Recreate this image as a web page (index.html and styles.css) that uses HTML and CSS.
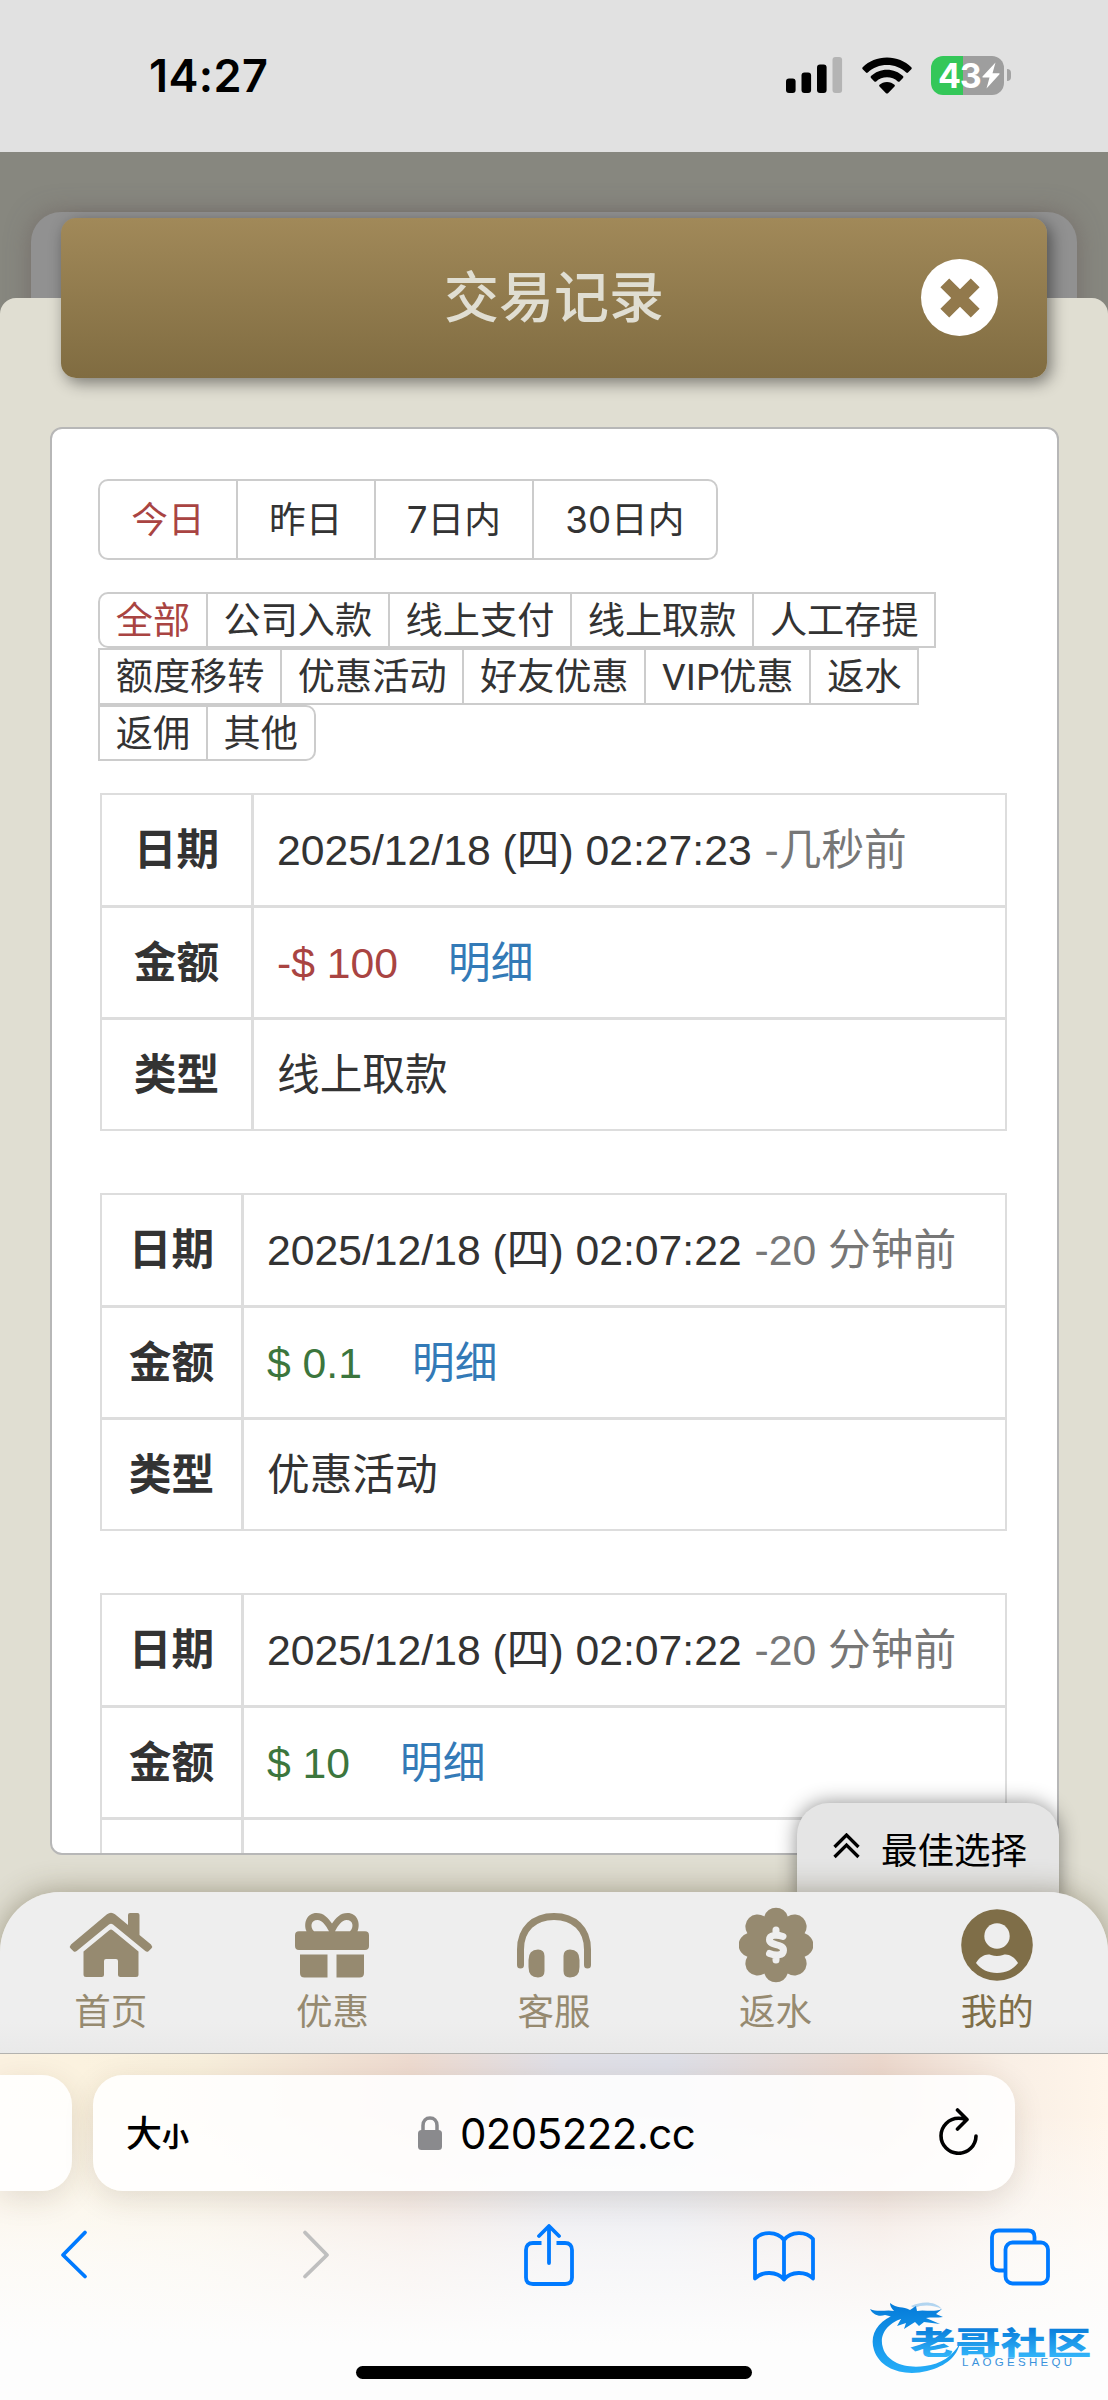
FILE: index.html
```html
<!DOCTYPE html>
<html lang="zh-CN">
<head>
  <meta charset="UTF-8" />
  <meta name="viewport" content="width=device-width, initial-scale=1" />
  <title>交易记录</title>
  <link rel="stylesheet" href="styles.css">
</head>
<body>
  <div class="phone">
    <header class="status-bar">
      <span class="clock">14:27</span>
      <div class="status-icons">
        <svg class="signal" viewBox="0 0 57 36" width="57" height="36">
          <rect x="0" y="21.500" width="9.600" height="14.500" rx="3" />
          <rect x="15.500" y="15.500" width="9.600" height="20.500" rx="3" />
          <rect x="31" y="7.500" width="9.600" height="28.500" rx="3" />
          <rect x="46.500" y="0" width="9.600" height="36" rx="3" fill="#b4b4b4" />
        </svg>
        <svg class="wifi" viewBox="0 0 50 37" width="50" height="37">
          <path d="M25 0.500C34.500 0.500 43 4 49.300 10.300Q50.200 11.300 49.300 12.200L46 15.600Q45.200 16.400 44.200 15.500C39 10.600 32.300 8 25 8S11 10.600 5.800 15.500Q4.800 16.400 4 15.600L0.700 12.200Q-0.200 11.300 0.700 10.300C7 4 15.500 0.500 25 0.500Z" />
          <path d="M25 12.800C31.200 12.800 36.800 15.200 41 19.100Q41.900 20.100 41 21L37.600 24.400Q36.700 25.200 35.800 24.400C32.800 21.700 29.100 20.300 25 20.300S17.200 21.700 14.200 24.400Q13.300 25.200 12.400 24.400L9 21Q8.100 20.100 9 19.100C13.200 15.200 18.800 12.800 25 12.800Z" />
          <path d="M25 25C28 25 30.600 26.100 32.500 27.800Q33.400 28.700 32.500 29.600L26 36.200Q25 37 24 36.200L17.500 29.600Q16.600 28.700 17.500 27.800C19.400 26.100 22 25 25 25Z" />
        </svg>
        <div class="battery">
          <span class="battery-level">43</span>
          <svg viewBox="0 0 18 27" width="18" height="27"><path d="M13.500 0.500 0.500 14.500Q0 15.500 1 15.500H7.500L4.500 26.500 17.500 12.300Q18 11.300 17 11.300H10.500Z" /></svg>
        </div>
      </div>
    </header>

    <main class="app">
      <div class="back-card"></div>
      <div class="modal-header">
        <h1>交易记录</h1>
        <button class="close" type="button" aria-label="关闭">
          <svg viewBox="0 0 40 40" width="40" height="40"><path d="M4.800 4.800 35.200 35.200M35.200 4.800 4.800 35.200" /></svg>
        </button>
      </div>

      <section class="sheet">
        <div class="panel">
          <div class="date-tabs">
            <span class="on">今日</span><span>昨日</span><span>7日内</span><span>30日内</span>
          </div>
          <div class="filters">
            <span class="on">全部</span><span>公司入款</span><span>线上支付</span><span>线上取款</span><span>人工存提</span><span>额度移转</span><span>优惠活动</span><span>好友优惠</span><span>VIP优惠</span><span>返水</span><span>返佣</span><span>其他</span>
          </div>

          <table class="record record-wide">
            <tr><th>日期</th><td>2025/12/18 (四) 02:27:23 <span class="ago">-几秒前</span></td></tr>
            <tr><th>金额</th><td><span class="minus">-$ 100</span><a class="detail">明细</a></td></tr>
            <tr><th>类型</th><td>线上取款</td></tr>
          </table>
          <table class="record">
            <tr><th>日期</th><td>2025/12/18 (四) 02:07:22 <span class="ago">-20 分钟前</span></td></tr>
            <tr><th>金额</th><td><span class="plus">$ 0.1</span><a class="detail">明细</a></td></tr>
            <tr><th>类型</th><td>优惠活动</td></tr>
          </table>
          <table class="record">
            <tr><th>日期</th><td>2025/12/18 (四) 02:07:22 <span class="ago">-20 分钟前</span></td></tr>
            <tr><th>金额</th><td><span class="plus">$ 10</span><a class="detail">明细</a></td></tr>
            <tr><th></th><td></td></tr>
          </table>
        </div>
      </section>

      <div class="best-pick">
        <svg viewBox="0 0 27 26" width="27" height="26"><path d="M1.500 14 13.500 2 25.500 14M1.500 24 13.500 12 25.500 24" /></svg>
        <span>最佳选择</span>
      </div>

      <nav class="tab-bar">
        <a>
          <svg viewBox="0 0 84 76" width="84" height="76">
            <path d="M38 7.200Q42 4.200 46 7.200L59 18V8Q59 6 61 6H68.500Q70.500 6 70.500 8V28L82 37.500Q84 39.500 82.300 41.500L79.500 44.200Q78 45.500 76.300 44L44 17.500Q42 16 40 17.500L7.700 44Q6 45.500 4.500 44.200L1.700 41.500Q0 39.500 2 37.500Z" />
            <path d="M40.300 23.200Q42 21.800 43.700 23.200L69.500 44.500V67.500Q69.500 70 67 70H51.500Q49 70 49 67.500V54Q49 52 47 52H37Q35 52 35 54V67.500Q35 70 32.500 70H17Q14.500 70 14.500 67.500V44.500Z" />
          </svg>
          <span>首页</span>
        </a>
        <a>
          <svg viewBox="0 0 74 76" width="74" height="76">
            <path fill-rule="evenodd" d="M4 24.300H11.500C8 16 12 6 21.500 6C29 6 33 11 37 16.500C41 11 45 6 52.500 6C62 6 66 16 62.500 24.300H70Q74 24.300 74 28.300V39Q74 43 70 43H4Q0 43 0 39V28.300Q0 24.300 4 24.300ZM19 24.300H34C31 18.500 27 13 22.500 13C15.500 13 15 20.500 19 24.300ZM40 24.300H55C59 20.500 58.500 13 51.500 13C47 13 43 18.500 40 24.300Z" />
            <path d="M5 47.500H32.500V70.500H9.500Q5 70.500 5 66ZM41.500 47.500H69V66Q69 70.500 64.500 70.500H41.500Z" />
          </svg>
          <span>优惠</span>
        </a>
        <a>
          <svg viewBox="0 0 76 76" width="76" height="76">
            <path class="band" d="M4.500 58V42.500C4.500 22 18 9.500 38 9.500S71.500 22 71.500 42.500V58" />
            <path d="M22 42.500Q28.500 42.500 28.500 49V64Q28.500 70.500 22 70.500Q12.500 70.500 12.500 60V53Q12.500 42.500 22 42.500ZM54 42.500Q47.500 42.500 47.500 49V64Q47.500 70.500 54 70.500Q63.500 70.500 63.500 60V53Q63.500 42.500 54 42.500Z" />
          </svg>
          <span>客服</span>
        </a>
        <a>
          <svg viewBox="0 0 74 76" width="74" height="76">
            <path d="M25.300 9.400A12.200 12.200 0 0 1 48.700 9.400A12.200 12.200 0 0 1 65.600 26.300A12.200 12.200 0 0 1 65.600 49.700A12.200 12.200 0 0 1 48.700 66.600A12.200 12.200 0 0 1 25.300 66.600A12.200 12.200 0 0 1 8.400 49.700A12.200 12.200 0 0 1 8.400 26.300A12.200 12.200 0 0 1 25.300 9.400Z" />
            <path class="coin" d="M37 23V28M37 48V53M44 29.500C38 27.500 30.500 27.500 30.500 32.800C30.500 39 44.500 36.500 44.500 43.200C44.500 49 36 48.800 30.500 46.500" />
          </svg>
          <span>返水</span>
        </a>
        <a class="current">
          <svg viewBox="0 0 74 76" width="74" height="76">
            <circle cx="37" cy="38" r="35.800" />
            <circle class="hole" cx="37" cy="29" r="12.700" />
            <path class="hole" d="M16 56C20 49.500 26 46.500 31 48Q37 49.800 43 48C48 46.500 54 49.500 58 56C53 62.500 46 66 37 66S21 62.500 16 56Z" />
          </svg>
          <span>我的</span>
        </a>
      </nav>
    </main>

    <footer class="browser">
      <div class="address-row">
        <div class="prev-tab"></div>
        <div class="address">
          <span class="text-size">大<small>小</small></span>
          <div class="url">
            <svg viewBox="0 0 24 34" width="24" height="34">
              <rect x="0" y="14" width="24" height="20" rx="3.500" />
              <path d="M5 16V9.500C5 4.500 8 2 12 2S19 4.500 19 9.500V16" />
            </svg>
            <span>0205222.cc</span>
          </div>
          <svg class="reload" viewBox="0 0 39 47" width="39" height="47">
            <path d="M27 11.500C24.600 10.700 22 10.300 19.500 10.300A17.500 17.500 0 1 0 37 28M18.500 2 28 11.500 18.500 21" />
          </svg>
        </div>
      </div>

      <div class="toolbar">
        <svg viewBox="0 0 28 62" width="28" height="62"><path d="M25 8.500 3 31 25 52.500" /></svg>
        <svg class="off" viewBox="0 0 28 62" width="28" height="62"><path d="M3 8.500 25 31 3 52.500" /></svg>
        <svg viewBox="0 0 50 62" width="50" height="62"><path stroke-linecap="butt" d="M17.500 19H9Q2 19 2 26V53.500Q2 60 9 60H41Q48 60 48 53.500V26Q48 19 41 19H32.500" /><path d="M25 39V2.500M15 12 25 2 35 12" /></svg>
        <svg viewBox="0 0 62 62" width="62" height="62"><path d="M31 16C24 7 9 7 2 15V54.500C9 47 24 47 31 55.500C38 47 53 47 60 54.500V15C53 7 38 7 31 16ZM31 16V55.500" /></svg>
        <svg viewBox="0 0 60 62" width="60" height="62"><rect x="15.500" y="18.500" width="42.500" height="41" rx="7" /><path stroke-linecap="butt" d="M44.500 18V13Q44.500 6.500 38 6.500H9Q2 6.500 2 13V40Q2 46.500 9 46.500H14.500" /></svg>
      </div>
      <div class="home-indicator"></div>

      <svg class="watermark" viewBox="0 0 226 80" width="226" height="80">
        <defs>
          <linearGradient id="blue" gradientUnits="userSpaceOnUse" x1="0" y1="8" x2="0" y2="72">
            <stop offset="0" stop-color="#067edb" />
            <stop offset="1" stop-color="#25adf8" />
          </linearGradient>
          <linearGradient id="name" x1="0" y1="0" x2="0" y2="1">
            <stop offset="0.200" stop-color="#087bd9" />
            <stop offset="0.900" stop-color="#35b8fb" />
          </linearGradient>
        </defs>
        <g fill="url(#blue)">
          <path d="M27 14C8 20-1 35 4 50C10 69 34 77 57 71C77 66 87 56 90 43C83 56 71 64 55 66C35 69 17 62 13 48C8 33 20 21 37 17Z" />
          <path d="M0 9C9 13 16 9 24 11C21 8 20 5 20 3C27 9 33 6 40 10L46 6 47 11C55 9 62 13 72 9L66 14 73 17C67 18 61 17 56 18L70 24 54 22 49 26 45 22 34 29 36 23 27 26 31 19C25 20 22 16 15 15C9 17 3 15 0 9Z" />
          <path d="M41 6C52 1 65 1 72 9C64 5 53 4 44 8Z" opacity="0.300" />
        </g>
        <text class="mark-name" transform="translate(40 54) scale(1.080 0.800)" textLength="168" lengthAdjust="spacingAndGlyphs" fill="url(#name)">老哥社区</text>
        <text class="mark-sub" x="92" y="66" textLength="110">LAOGESHEQU</text>
      </svg>
    </footer>
  </div>
</body>
</html>
```

FILE: styles.css
```css
:root {
  --gold: #968a70;
  --gold-dark: #7f6e48;
  --cream: #e0ded2;
  --text: #333;
  --line: #ddd;
  --red: #a94442;
  --green: #3c763d;
  --link: #337ab7;
  --ios-blue: #007aff;
}
* {
  box-sizing: border-box;
}
body {
  margin: 0;
  font-family: "Liberation Sans", "Noto Sans CJK SC", sans-serif;
  color: var(--text);
}
svg {
  display: block;
}
.phone {
  width: 1108px;
  height: 2400px;
  overflow: hidden;
}

/* status bar */
.status-bar {
  height: 152px;
  padding: 0 97px 0 149px;
  background: #e1e1e1;
  display: flex;
  justify-content: space-between;
  color: #000;
  font-family: Inter, sans-serif;
}
.clock {
  padding-top: 49px;
  font-size: 45px;
  line-height: 54px;
  font-weight: 600;
  letter-spacing: 0.4px;
}
.status-icons {
  height: 40px;
  margin-top: 55px;
  display: flex;
  align-items: center;
}
.wifi {
  margin-left: 19px;
}
.battery {
  width: 73px;
  height: 39px;
  margin: 0 7px 0 19px;
  padding: 0 4px 0 7px;
  border-radius: 12px;
  background: linear-gradient(90deg, #34c759 32px, #9e9e9e 32px);
  color: #fff;
  display: flex;
  align-items: center;
  justify-content: space-between;
  position: relative;
}
.battery::after {
  content: "";
  position: absolute;
  right: -7px;
  top: 13px;
  width: 4px;
  height: 12px;
  border-radius: 0 4px 4px 0;
  background: #a3a3a3;
}
.battery-level {
  font-size: 34px;
  line-height: 39px;
  font-weight: 700;
  letter-spacing: -1.3px;
}
.battery svg {
  flex: none;
  margin-left: -4px;
  fill: #fff;
}

/* page */
.app {
  position: relative;
  height: 1901px;
  padding-top: 66px;
  background: #87877f;
  overflow: hidden;
}
.back-card {
  position: absolute;
  top: 60px;
  left: 31px;
  right: 31px;
  height: 200px;
  border-radius: 30px;
  background: #919191;
  box-shadow: 0 0 24px rgba(100, 85, 85, 0.5);
}
.modal-header {
  position: relative;
  z-index: 2;
  height: 160px;
  margin: 0 61px;
  border-radius: 15px;
  background: linear-gradient(#a18959, #806c41);
  box-shadow: 4px 5px 16px rgba(0, 0, 0, 0.45);
  display: flex;
  align-items: center;
  justify-content: center;
}
.modal-header h1 {
  margin: 0 0 11px;
  color: var(--cream);
  font-family: "Noto Sans CJK SC", sans-serif;
  font-size: 55px;
  line-height: 80px;
  font-weight: 500;
}
.close {
  position: absolute;
  right: 49px;
  top: 41px;
  width: 77px;
  height: 77px;
  padding: 0;
  border: none;
  border-radius: 50%;
  background: #fff;
  display: flex;
  align-items: center;
  justify-content: center;
}
.close path {
  stroke: #92794c;
  stroke-width: 12.500;
}
.sheet {
  position: relative;
  margin-top: -80px;
  height: 1756px;
  padding: 129px 49px 0 50px;
  border-radius: 16px 16px 0 0;
  background: var(--cream);
}
.panel {
  height: 1428px;
  padding: 50px 50px 0 46px;
  border: 2px solid #b7b7b7;
  border-radius: 12px;
  background: #fff;
  overflow: hidden;
}

/* filters */
.date-tabs, .filters {
  display: flex;
  font-family: Roboto, "Noto Sans CJK SC", sans-serif;
  font-size: 37.200px;
}
.date-tabs span, .filters span {
  border: 2px solid #ccc;
  margin-right: -2px;
}
.date-tabs span {
  height: 81px;
  padding: 0 31.200px;
  font-family: Inter, "Noto Sans CJK SC", sans-serif;
  font-size: 36.700px;
  line-height: 77px;
}
.filters {
  flex-wrap: wrap;
  margin-top: 31.500px;
  width: 880px;
}
.filters span {
  height: 56.600px;
  padding: 0 15.700px;
  line-height: 54px;
}
.date-tabs span:first-child {
  border-radius: 10px 0 0 10px;
}
.date-tabs span:last-child {
  border-radius: 0 10px 10px 0;
}
.filters span:first-child {
  border-radius: 10px 0 0 10px;
}
.filters span:last-child {
  border-radius: 0 10px 10px 0;
}
.on {
  color: var(--red);
}

/* records */
.record {
  width: 907px;
  margin: 0 0 62px 2px;
  border: 2px solid var(--line);
  border-collapse: separate;
  border-spacing: 0;
  table-layout: fixed;
  font-size: 42.700px;
  line-height: 60px;
}
.filters + .record {
  margin-top: 32px;
}
.record tr {
  height: 112px;
}
.record tr:first-child {
  height: 110px;
}
.record th {
  width: 142px;
  padding: 0;
  border-right: 3px solid var(--line);
}
.record-wide th {
  width: 152px;
}
.record td {
  padding: 0 0 0 23px;
  white-space: nowrap;
}
.record tr + tr th, .record tr + tr td {
  border-top: 3px solid var(--line);
}
.ago {
  margin-left: 1px;
  color: #777;
}
.minus {
  color: var(--red);
}
.plus {
  color: var(--green);
}
.detail {
  margin-left: 50px;
  color: var(--link);
}

/* bottom of the page */
.best-pick {
  position: absolute;
  left: 797px;
  bottom: 149px;
  width: 262px;
  height: 101px;
  padding: 30px 0 0 36px;
  border-radius: 32px 32px 0 0;
  background: #e5e5e5;
  box-shadow: 0 0 20px rgba(0, 0, 0, 0.45);
  display: flex;
  gap: 21px;
  color: #000;
  font-family: "Noto Sans CJK SC", sans-serif;
  font-size: 36.500px;
  line-height: 32px;
}
.best-pick path {
  fill: none;
  stroke: #000;
  stroke-width: 3.300;
}
.tab-bar {
  position: absolute;
  z-index: 3;
  left: 0;
  right: 0;
  bottom: 0;
  height: 161px;
  padding-top: 15px;
  display: flex;
}
.tab-bar::before {
  content: "";
  position: absolute;
  inset: 0 0 -60px;
  z-index: -1;
  border-radius: 60px;
  background: linear-gradient(#eee 130px, #e9e9e9 162px);
  box-shadow: 0 0 30px rgba(80, 70, 40, 0.45);
}
.tab-bar a {
  flex: 1;
  display: flex;
  flex-direction: column;
  align-items: center;
  gap: 6px;
  color: var(--gold);
  font-family: "Noto Sans CJK SC", sans-serif;
  font-size: 36.500px;
  line-height: 42px;
}
.tab-bar .current {
  color: var(--gold-dark);
}
.tab-bar svg {
  fill: currentColor;
}
.tab-bar .band {
  fill: none;
  stroke: currentColor;
  stroke-width: 7;
  stroke-linecap: round;
}
.tab-bar .coin {
  fill: none;
  stroke: #eee;
  stroke-width: 7;
  stroke-linecap: round;
}
.tab-bar .hole {
  fill: #eee;
}

/* browser chrome */
.browser {
  position: relative;
  height: 347px;
  padding-top: 21px;
  border-top: 1px solid #b3b2af;
  background:
    linear-gradient(rgba(253, 253, 253, 0) 60px, rgba(253, 253, 253, 0.75) 200px, #fdfdfd 290px),
    linear-gradient(90deg, #fbf1e0 0, #fbf2df 80px, #f8efdc 200px, #eedbd0 410px, #e0dfe6 560px, #dedfe7 670px, #ecd8cd 880px, #f9efe5 1010px, #fff5ea 1108px);
}
.address-row {
  display: flex;
  gap: 21px;
}
.prev-tab, .address {
  height: 116px;
  background: rgba(255, 255, 255, 0.88);
  box-shadow: 0 8px 30px rgba(60, 50, 20, 0.13);
}
.prev-tab {
  width: 72px;
  border-radius: 0 30px 30px 0;
}
.address {
  width: 922px;
  padding: 0 37px 0 33px;
  border-radius: 30px;
  display: flex;
  align-items: center;
  justify-content: space-between;
  color: #000;
}
.text-size {
  width: 65px;
  font-family: "Noto Sans CJK SC", sans-serif;
  font-size: 36px;
  line-height: 50px;
  font-weight: 500;
  white-space: nowrap;
}
.text-size small {
  font-size: 27px;
  font-weight: 700;
}
.url {
  margin-left: -17px;
  display: flex;
  align-items: center;
  gap: 18px;
  font-family: Inter, sans-serif;
  font-size: 42px;
  line-height: 50px;
  letter-spacing: -0.600px;
}
.url span {
  padding-top: 2px;
}
.url svg {
  fill: #8a8a8d;
}
.url path {
  fill: none;
  stroke: #8a8a8d;
  stroke-width: 3.500;
}
.reload {
  margin-top: -4px;
  fill: none;
  stroke: #000;
  stroke-width: 3.600;
  stroke-linecap: round;
  stroke-linejoin: round;
}
.toolbar {
  margin-top: 33px;
  padding-left: 60px;
  display: grid;
  grid-template-columns: 242px 222px 229px 237px 60px;
}
.toolbar svg {
  fill: none;
  stroke: var(--ios-blue);
  stroke-width: 3.800;
  stroke-linecap: round;
  stroke-linejoin: round;
}
.toolbar .off {
  stroke: #bfbfbf;
}
.home-indicator {
  width: 396px;
  height: 13px;
  margin: 80px auto 0;
  border-radius: 7px;
  background: #000;
}
.watermark {
  position: absolute;
  left: 870px;
  top: 246px;
}
.mark-name {
  font-family: "Noto Sans CJK SC", sans-serif;
  font-size: 39px;
  font-weight: 900;
}
.mark-sub {
  font-family: "Liberation Sans", sans-serif;
  font-size: 11.500px;
  fill: #3a92dc;
}
```
